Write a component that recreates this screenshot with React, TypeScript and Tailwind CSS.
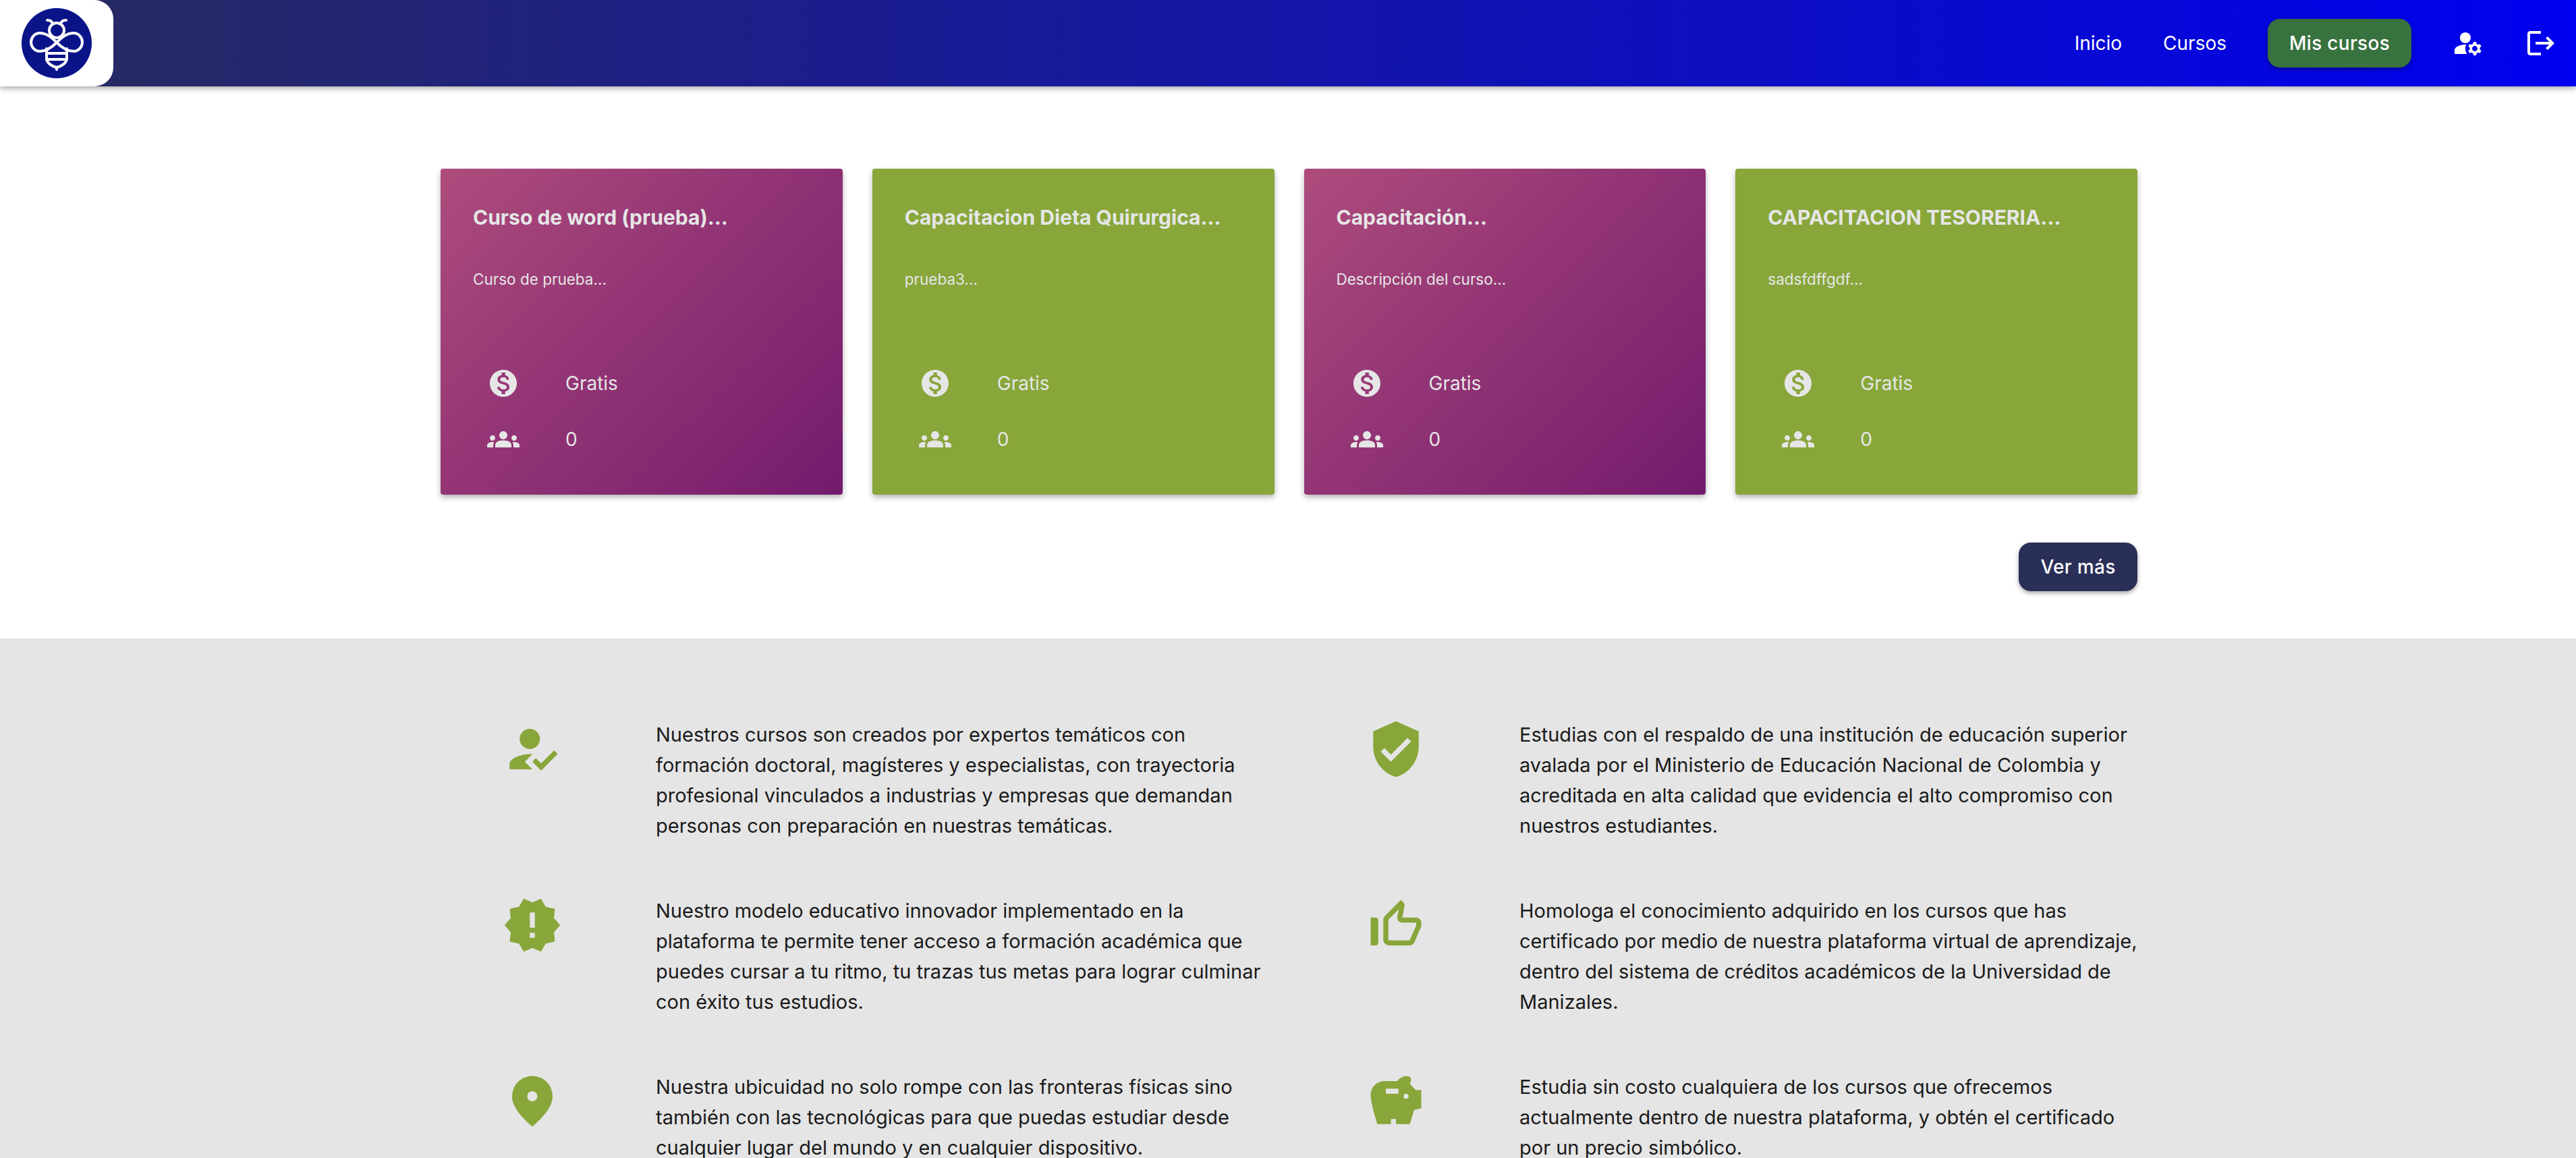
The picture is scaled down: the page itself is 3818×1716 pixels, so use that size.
import type { ReactNode } from 'react'
import {
  MdGroups,
  MdHowToReg,
  MdLogout,
  MdManageAccounts,
  MdMonetizationOn,
  MdNewReleases,
  MdFmdGood,
  MdThumbUpOffAlt,
  MdVerifiedUser,
} from 'react-icons/md'

const courses = [
  { title: 'Curso de word (prueba)...', desc: 'Curso de prueba...', purple: true },
  { title: 'Capacitacion Dieta Quirurgica...', desc: 'prueba3...', purple: false },
  { title: 'Capacitación...', desc: 'Descripción del curso...', purple: true },
  { title: 'CAPACITACION TESORERIA...', desc: 'sadsfdffgdf...', purple: false },
]

function SavingsSharp({ className }: { className?: string }) {
  return (
    <svg viewBox="0 0 24 24" fill="currentColor" className={className}>
      <path d="M19.83 7.5l-2.27-2.27c.07-.42.18-.81.32-1.15.11-.26.15-.56.09-.87-.13-.72-.83-1.22-1.57-1.21-1.59.03-2.97.81-3.9 2h-5C4.46 4 2 6.46 2 9.5c0 2.25 1.37 7.48 2.65 11.5H10v-2h2v2h5.5l1.68-5.59L22 14.82V7.5h-2.17zM13 9H8V7h5v2zm3 2c-.55 0-1-.45-1-1s.45-1 1-1 1 .45 1 1-.45 1-1 1z" />
    </svg>
  )
}

function BeeLogo() {
  return (
    <svg viewBox="0 0 104 104" className="w-[104px] h-[104px]">
      <circle cx="52" cy="52" r="52" fill="#0a1488" />
      <g fill="none" stroke="#fff" strokeWidth="4" strokeLinecap="round" strokeLinejoin="round">
        <circle cx="52" cy="33" r="11" />
        <path d="M46 23c-1-3-3-5.500-8-5M58 23c1-3 3-5.500 8-5" />
        <path d="M52 51C43 42 36 37 27 37C19 37 14 44 14 50.500C14 57 19 64 27 64C36 64 43 60 52 51C61 42 68 37 77 37C85 37 90 44 90 50.500C90 57 85 64 77 64C68 64 61 60 52 51Z" />
        <path d="M37 60V74C37 81 44 86 52 88C60 86 67 81 67 74V60" />
        <path d="M37 67H67M37 76H67M52 88V91" />
      </g>
    </svg>
  )
}

function CourseCard({ title, desc, purple }: { title: string; desc: string; purple: boolean }) {
  return (
    <div
      className={`h-[483px] rounded-[4px] pl-[48px] pt-[52px] text-[#e6e6e6] shadow-[0_4px_8px_rgba(0,0,0,0.3)] ${
        purple ? 'bg-[linear-gradient(135deg,#ad4c7c,#741a6d)]' : 'bg-[#88a63a]'
      }`}
    >
      <div className="h-[40px] text-[30px] leading-[40px] font-bold">{title}</div>
      <div className="mt-[52px] h-[40px] text-[22.5px] leading-[40px]">{desc}</div>
      <div className="mt-[110px] flex h-[83px] items-start">
        <div className="flex w-[90px] h-[48px] items-center justify-center">
          <MdMonetizationOn className="text-[48px]" />
        </div>
        <div className="pl-[47px] text-[28px] leading-[48px]">Gratis</div>
      </div>
      <div className="flex items-start">
        <div className="flex w-[90px] h-[48px] items-center justify-center">
          <MdGroups className="text-[48px]" />
        </div>
        <div className="pl-[47px] text-[28px] leading-[48px]">0</div>
      </div>
    </div>
  )
}

function Feature({ icon, children }: { icon: ReactNode; children: ReactNode }) {
  return (
    <div className="flex h-[180px] items-start">
      <div className="flex w-[268px] justify-center text-[#88a63a] text-[90px] leading-none">{icon}</div>
      <p className="ml-[49px] w-[925px] pt-[1px] text-[29px] leading-[45px] text-[#1a1a1a]">{children}</p>
    </div>
  )
}

export default function App() {
  return (
    <div className="h-[1716px] overflow-hidden bg-white font-['Inter','Liberation_Sans',sans-serif]">
      <header className="relative z-10 flex h-[128px] items-center bg-[linear-gradient(90deg,#282b5e,#0000f0)] shadow-[0_3px_8px_rgba(0,0,0,0.35)]">
        <div className="flex h-[128px] w-[168px] items-center justify-center rounded-r-[28px] bg-white">
          <BeeLogo />
        </div>
        <nav className="ml-auto flex items-center text-[28px] text-white">
          <a className="mr-[61px]">Inicio</a>
          <a className="mr-[61px]">Cursos</a>
          <button className="mr-[60px] h-[72px] w-[213px] rounded-[18px] bg-[#38723f] text-[28px] font-medium tracking-[0.3px] text-white shadow-[0_3px_6px_rgba(0,0,0,0.35)]">
            Mis cursos
          </button>
          <MdManageAccounts className="mr-[60px] text-[48px]" />
          <MdLogout className="mr-[28px] text-[48px]" />
        </nav>
      </header>

      <section className="h-[818px] pt-[122px]">
        <div className="ml-[653px] grid w-[2515px] grid-cols-4 gap-[44px]">
          {courses.map(c => (
            <CourseCard key={c.title} {...c} />
          ))}
        </div>
        <div className="ml-[653px] mt-[71px] flex w-[2515px] justify-end">
          <button className="h-[72px] w-[176px] rounded-[18px] bg-[#2a2f58] text-[28px] font-medium tracking-[0.3px] text-white shadow-[0_3px_6px_rgba(0,0,0,0.35)]">
            Ver más
          </button>
        </div>
      </section>

      <section className="h-[770px] bg-[#e5e5e5] pt-[119px]">
        <div className="ml-[655px] grid w-[2560px] grid-cols-[1280px_1280px] gap-y-[81px]">
          <Feature icon={<MdHowToReg />}>
            Nuestros cursos son creados por expertos temáticos con formación doctoral, magísteres y especialistas, con trayectoria profesional vinculados a industrias y empresas que demandan personas con preparación en nuestras temáticas.
          </Feature>
          <Feature icon={<MdVerifiedUser />}>
            Estudias con el respaldo de una institución de educación superior avalada por el Ministerio de Educación Nacional de Colombia y acreditada en alta calidad que evidencia el alto compromiso con nuestros estudiantes.
          </Feature>
          <Feature icon={<MdNewReleases />}>
            Nuestro modelo educativo innovador implementado en la plataforma te permite tener acceso a formación académica que puedes cursar a tu ritmo, tu trazas tus metas para lograr culminar con éxito tus estudios.
          </Feature>
          <Feature icon={<MdThumbUpOffAlt />}>
            Homologa el conocimiento adquirido en los cursos que has certificado por medio de nuestra plataforma virtual de aprendizaje, dentro del sistema de créditos académicos de la Universidad de Manizales.
          </Feature>
          <Feature icon={<MdFmdGood />}>
            Nuestra ubicuidad no solo rompe con las fronteras físicas sino también con las tecnológicas para que puedas estudiar desde cualquier lugar del mundo y en cualquier dispositivo.
          </Feature>
          <Feature icon={<SavingsSharp className="h-[90px] w-[90px]" />}>
            Estudia sin costo cualquiera de los cursos que ofrecemos actualmente dentro de nuestra plataforma, y obtén el certificado por un precio simbólico.
          </Feature>
        </div>
      </section>
    </div>
  )
}
